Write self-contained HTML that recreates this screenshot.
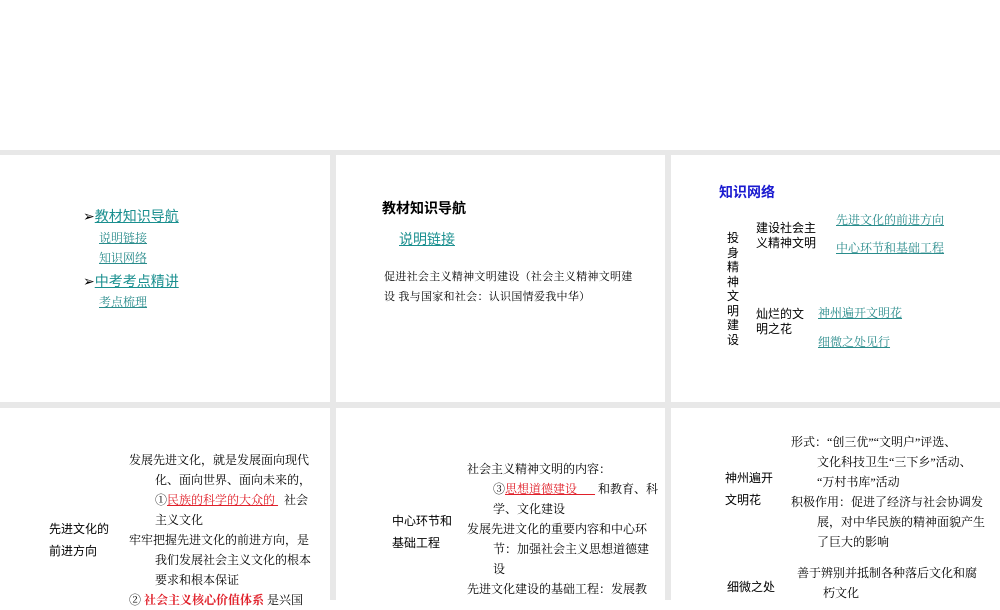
<!DOCTYPE html>
<html><head><meta charset="utf-8"><style>
body{margin:0;width:1000px;height:600px;background:#fff;position:relative;overflow:hidden;font-family:"Liberation Serif","Noto Serif CJK SC","Noto Sans CJK SC",serif;color:#000}
.g{position:absolute;background:#e8e8e8}
.t{position:absolute;white-space:nowrap;font-size:12px}
.a{color:#2a8c8c;text-decoration:underline}
.s{font-family:"Liberation Sans","Noto Sans CJK SC",sans-serif}
.r{color:#e0202a}
</style></head><body>
<div class="g" style="left:0;top:150px;width:1000px;height:5px"></div>
<div class="g" style="left:0;top:402px;width:1000px;height:6px"></div>
<div class="g" style="left:330px;top:150px;width:6px;height:450px"></div>
<div class="g" style="left:665px;top:150px;width:6px;height:450px"></div>

<div class="t s" style="left:83px;top:206px;font-size:14px">➢<span class="a" style="color:#1a8f8f">教材知识导航</span></div>
<div class="t a" style="left:99px;top:229px">说明链接</div>
<div class="t a" style="left:99px;top:249px">知识网络</div>
<div class="t s" style="left:83px;top:271px;font-size:14px">➢<span class="a" style="color:#1a8f8f">中考考点精讲</span></div>
<div class="t a" style="left:99px;top:293px">考点梳理</div>

<div class="t s" style="left:382px;top:198px;font-size:14px;font-weight:bold">教材知识导航</div>
<div class="t s a" style="left:399px;top:229px;font-size:14px;color:#1a8f8f">说明链接</div>
<div class="t" style="left:384px;top:268px;font-size:11px;letter-spacing:0.3px">促进社会主义精神文明建设（社会主义精神文明建</div>
<div class="t" style="left:384px;top:288px;font-size:11px;letter-spacing:0.3px">设 我与国家和社会：认识国情爱我中华）</div>

<div class="t s" style="left:719px;top:182px;font-size:14px;font-weight:bold;color:#1a1ad0">知识网络</div>
<div class="t s" style="left:727px;top:231px;width:14px;white-space:normal;line-height:14.5px">投身精神文明建设</div>
<div class="t s" style="left:756px;top:221px;line-height:15px">建设社会主<br>义精神文明</div>
<div class="t a" style="left:836px;top:211px">先进文化的前进方向</div>
<div class="t a" style="left:836px;top:239px">中心环节和基础工程</div>
<div class="t s" style="left:756px;top:307px;line-height:15px">灿烂的文<br>明之花</div>
<div class="t a" style="left:818px;top:304px">神州遍开文明花</div>
<div class="t a" style="left:818px;top:333px">细微之处见行</div>

<div class="t s" style="left:49px;top:518px;line-height:22px">先进文化的<br>前进方向</div>
<div class="t" style="left:129px;top:450px;line-height:20px">发展先进文化，就是发展面向现代<br><span style="padding-left:26px">化、面向世界、面向未来的，</span><br><span style="padding-left:26px">①<span class="r" style="text-decoration:underline">民族的科学的大众的&nbsp;</span>&nbsp; 社会</span><br><span style="padding-left:26px">主义文化</span><br>牢牢把握先进文化的前进方向，是<br><span style="padding-left:26px">我们发展社会主义文化的根本</span><br><span style="padding-left:26px">要求和根本保证</span><br>② <span class="r" style="font-weight:bold">社会主义核心价值体系</span> 是兴国</div>

<div class="t s" style="left:392px;top:510px;line-height:22px">中心环节和<br>基础工程</div>
<div class="t" style="left:467px;top:459px;line-height:20px">社会主义精神文明的内容：<br><span style="padding-left:26px">③<span class="r" style="text-decoration:underline">思想道德建设&nbsp;&nbsp;&nbsp;&nbsp;&nbsp;&nbsp;</span> 和教育、科</span><br><span style="padding-left:26px">学、文化建设</span><br>发展先进文化的重要内容和中心环<br><span style="padding-left:26px">节：加强社会主义思想道德建</span><br><span style="padding-left:26px">设</span><br>先进文化建设的基础工程：发展教</div>

<div class="t s" style="left:725px;top:467px;line-height:22px">神州遍开<br>文明花</div>
<div class="t" style="left:791px;top:432px;line-height:20px">形式：“创三优”“文明户”评选、<br><span style="padding-left:26px">文化科技卫生“三下乡”活动、</span><br><span style="padding-left:26px">“万村书库”活动</span><br>积极作用：促进了经济与社会协调发<br><span style="padding-left:26px">展，对中华民族的精神面貌产生</span><br><span style="padding-left:26px">了巨大的影响</span></div>
<div class="t s" style="left:727px;top:578px">细微之处</div>
<div class="t" style="left:797px;top:563px;line-height:20px">善于辨别并抵制各种落后文化和腐<br><span style="padding-left:26px">朽文化</span></div>
</body></html>
